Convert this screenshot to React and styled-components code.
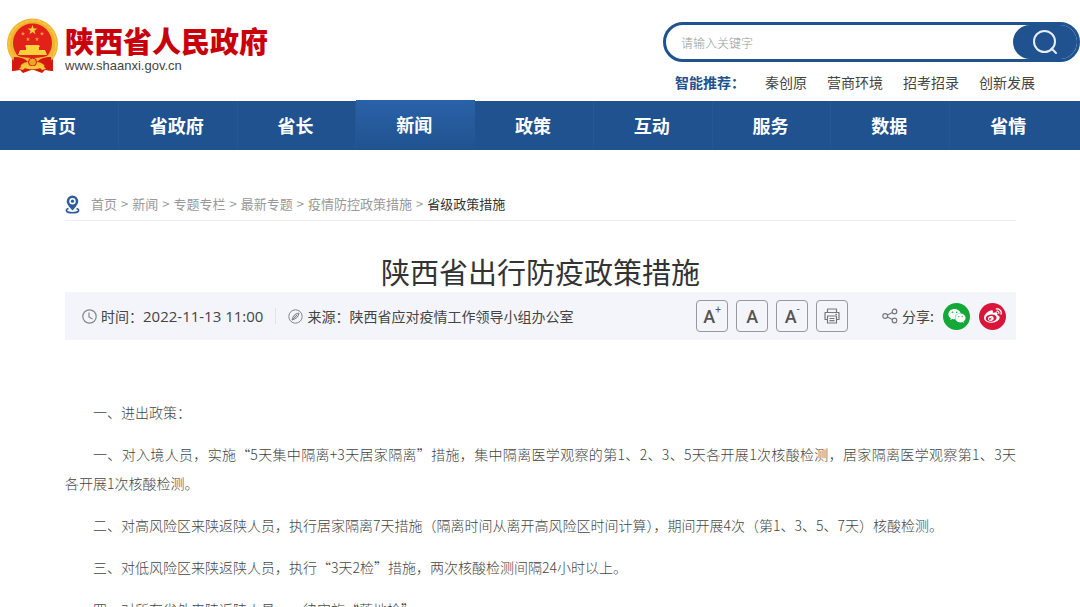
import React, { useState } from 'react';
import styled, { createGlobalStyle } from 'styled-components';
import { FaWeixin, FaWeibo } from 'react-icons/fa';

const NAV_ITEMS = ['首页', '省政府', '省长', '新闻', '政策', '互动', '服务', '数据', '省情'];

const HOT_WORDS = ['秦创原', '营商环境', '招考招录', '创新发展'];

const CRUMBS = ['首页', '新闻', '专题专栏', '最新专题', '疫情防控政策措施'];

// \u2060 keeps "各开展" together on one line
const PARAGRAPHS = [
  '一、进出政策：',
  '一、对入境人员，实施“5天集中隔离+3天居家隔离”措施，集中隔离医学观察的第1、2、3、5天各开展1次核酸检测，居家隔离医学观察第1、3天各\u2060开展1次核酸检测。',
  '二、对高风险区来陕返陕人员，执行居家隔离7天措施（隔离时间从离开高风险区时间计算），期间开展4次（第1、3、5、7天）核酸检测。',
  '三、对低风险区来陕返陕人员，执行“3天2检”措施，两次核酸检测间隔24小时以上。',
  '四、对所有省外来陕返陕人员，一律实施“落地检”。',
];

const GlobalStyle = createGlobalStyle`
  * {
    box-sizing: border-box;
  }

  html {
    overflow: hidden;
  }

  body {
    margin: 0;
    height: 100vh;
    overflow: hidden;
    background: #fff;
    color: #444;
    font-family: 'Noto Sans CJK SC', sans-serif;
    font-size: 14px;
  }

  a {
    color: inherit;
    text-decoration: none;
  }

  button {
    font: inherit;
    cursor: pointer;
  }
`;

const Header = styled.header`
  display: flex;
  justify-content: space-between;
  height: 101px;
  padding-left: 6px;
`;

const Brand = styled.a`
  display: flex;
  align-items: flex-start;
  gap: 6px;
  padding-top: 18px;
`;

const BrandText = styled.div`
  display: flex;
  flex-direction: column;
  padding-top: 4px;
`;

const BrandName = styled.span`
  color: #c8000b;
  font-size: 29px;
  font-weight: 900;
  line-height: 36px;
`;

const BrandUrl = styled.span`
  color: #444;
  font-family: 'Liberation Sans', Arial, sans-serif;
  font-size: 13px;
  line-height: 16px;
`;

const SearchArea = styled.div`
  flex: 0 1 417px;
  padding-top: 22px;
`;

const SearchForm = styled.form`
  display: flex;
  height: 40px;
  border: 3px solid #20528f;
  border-radius: 20px;
  background: #fff;
`;

const SearchInput = styled.input`
  flex: 1;
  min-width: 0;
  padding: 0 15px;
  border: 0;
  border-radius: 20px;
  outline: 0;
  background: transparent;
  font-family: inherit;
  font-size: 12px;

  &::placeholder {
    color: #999;
    font-weight: 300;
  }
`;

const SearchButton = styled.button`
  display: flex;
  align-items: center;
  justify-content: center;
  width: 64px;
  padding: 0;
  border: 0;
  border-radius: 17px;
  background: #20528f;
  color: #fff;
`;

const HotWords = styled.div`
  display: flex;
  align-items: center;
  gap: 20px;
  padding: 10px 0 0 12px;
  line-height: 20px;

  strong {
    width: 70px;
    color: #20528f;
    white-space: nowrap;
  }
`;

const Nav = styled.nav`
  display: flex;
  height: 49px;
  padding-right: 12px;
  background: #20528f;
`;

const NavLink = styled.a`
  display: flex;
  flex: 1;
  align-items: center;
  justify-content: center;
  padding: 0 2px 2px 0;
  border-right: 1px solid ${props => (props.$active ? 'transparent' : '#265793')};
  color: #fff;
  font-size: 18px;
  font-weight: 700;
  ${props => props.$active && `
    margin-top: -1px;
    background: linear-gradient(#2a62a8, #20528f);
  `}

  &:last-child {
    border-right: 0;
  }
`;

const Content = styled.main`
  padding: 38px 64px 0 65px;
`;

const Breadcrumb = styled.nav`
  display: flex;
  align-items: center;
  gap: 4px;
  height: 33px;
  border-bottom: 1px solid #ececec;
  color: #999;
  font-size: 13px;
  line-height: 20px;

  svg {
    margin-right: 7px;
  }
`;

const Current = styled.span`
  color: #333;
`;

const Title = styled.h1`
  margin: 29px 0 0;
  color: #333;
  font-size: 29px;
  font-weight: 400;
  line-height: 42px;
  text-align: center;
`;

const MetaBar = styled.div`
  display: flex;
  align-items: center;
  justify-content: space-between;
  height: 48px;
  padding: 0 10px 0 17px;
  background: #f4f5fb;
`;

const MetaGroup = styled.div`
  display: flex;
  align-items: center;
`;

const MetaItem = styled.span`
  display: flex;
  align-items: center;
  gap: 4px;
  line-height: 20px;

  & + & {
    margin-left: 12px;
    padding-left: 12px;
    border-left: 1px solid #e2e3e8;
    line-height: 16px;
  }

  time {
    font-family: 'Open Sans', sans-serif;
    font-size: 15px;
  }
`;

const Tools = styled.div`
  display: flex;
  gap: 8px;
`;

const ToolButton = styled.button`
  display: flex;
  align-items: center;
  justify-content: center;
  width: 32px;
  height: 32px;
  padding: 0;
  border: 1px solid #97989c;
  border-radius: 4px;
  background: transparent;
  color: #555;
  font-family: 'Roboto', sans-serif;
  font-size: 18px;
  font-weight: 500;

  sup {
    align-self: flex-start;
    font-size: 10px;
    font-weight: 400;
    line-height: 18px;
  }
`;

const Share = styled.div`
  display: flex;
  align-items: center;
  gap: 9px;
  margin-left: 34px;
`;

const ShareLabel = styled.span`
  display: flex;
  align-items: center;
  gap: 4px;
  font-size: 14px;
`;

const ShareButton = styled.button`
  display: flex;
  align-items: center;
  justify-content: center;
  width: 27px;
  height: 27px;
  padding: 0;
  border: 0;
  border-radius: 50%;
  background: ${props => props.$color};
  color: #fff;
`;

const Article = styled.article`
  padding-top: 58px;
  color: #444;
  font-weight: 300;
  line-height: 29px;

  p {
    margin: 0 0 13px;
    text-indent: 2em;
    text-align: justify;
  }
`;

const Emblem = () => (
  <svg width="53" height="56" viewBox="0 0 53 56" aria-hidden="true">
    <path d="M6 39 L16 43 L37 43 L47 39 L47 53 L39 52 L36 55 L28 52 L25 52 L17 55 L14 52 L6 53Z" fill="#d3180f" />
    <circle cx="26.500" cy="26" r="25.500" fill="#f0b32c" />
    <circle cx="26.500" cy="26" r="23.500" fill="none" stroke="#f6c544" strokeWidth="2" strokeDasharray="5 1" />
    <circle cx="26.500" cy="25" r="19.500" fill="#e2211a" />
    <path d="M26.500 7 L27.700 10.500 H31.400 L28.400 12.700 L29.500 16.300 L26.500 14 L23.500 16.300 L24.600 12.700 L21.600 10.500 H25.300Z" fill="#fbd23c" />
    <path d="M17 13.500l.6 1.500h1.500l-1.200 1 .4 1.500-1.300-.8-1.300.8.4-1.500-1.200-1h1.500zM36 13.500l.6 1.500h1.500l-1.200 1 .4 1.500-1.300-.8-1.300.8.4-1.500-1.200-1h1.500zM22 19l.6 1.500h1.500l-1.200 1 .4 1.500-1.300-.8-1.300.8.4-1.500-1.200-1h1.500zM31 19l.6 1.500h1.500l-1.200 1 .4 1.500-1.300-.8-1.300.8.4-1.500-1.200-1h1.500z" fill="#f09a3a" />
    <path d="M20 27H33L34 29H33V32H39L41 37H12L14 32H20V29H19Z" fill="#fbd23c" />
    <path d="M7 36 Q15 40 26.500 40 Q38 40 46 36 L44 42 Q35 44 31 49 H22 Q18 44 9 42Z" fill="#f5bd35" />
    <path d="M8 39 Q18 39 22 44 Q15 44 12 52 L6 53 L7 45ZM45 39 Q35 39 31 44 Q38 44 41 52 L47 53 L46 45Z" fill="#d3180f" />
    <circle cx="26.500" cy="44" r="4" fill="#f0a52a" stroke="#d3180f" />
    <path d="M13 51 Q19 44 23 48 H30 Q34 44 40 51 L36 52 Q33 48 30 51 H23 Q20 48 17 52Z" fill="#f6c83a" />
  </svg>
);

const SearchIcon = () => (
  <svg width="26" height="26" viewBox="0 0 26 26" fill="none" stroke="#e6effa" strokeWidth="2" strokeLinecap="round">
    <circle cx="12.500" cy="12.500" r="10.500" />
    <path d="M19.500 19.500 L24 24" />
  </svg>
);

const PinIcon = () => (
  <svg width="15" height="19" viewBox="0 0 15 19" fill="none" aria-hidden="true">
    <path d="M3.500 13.500 C0 14.500 0.500 17.800 7.500 17.800 C14.500 17.800 15 14.500 11.500 13.500" stroke="#2c5c9c" strokeWidth="1.600" />
    <path d="M7.500 0.500 A5.800 5.800 0 0 0 1.700 6.300 C1.700 10 7.500 15.500 7.500 15.500 C7.500 15.500 13.300 10 13.300 6.300 A5.800 5.800 0 0 0 7.500 0.500Z" fill="#2c5c9c" />
    <circle cx="7.500" cy="6.200" r="3.200" fill="#fff" />
    <circle cx="7.500" cy="6.200" r="1.600" fill="#2c5c9c" />
  </svg>
);

const ClockIcon = () => (
  <svg width="15" height="15" viewBox="0 0 15 15" fill="none" stroke="#85868b" strokeWidth="1.200" aria-hidden="true">
    <circle cx="7.500" cy="7.500" r="6.700" />
    <path d="M7 3.500 V8 L10.500 10" />
  </svg>
);

const CompassIcon = () => (
  <svg width="15" height="15" viewBox="0 0 15 15" fill="none" stroke="#85868b" strokeWidth="1" aria-hidden="true">
    <circle cx="7.500" cy="7.500" r="6.700" />
    <path d="M11 4 C7 4.500 4.500 7 4 11 C8 10 10.500 8 11 4Z" fill="#d5d6da" />
    <path d="M4 11 L9 6" />
  </svg>
);

const PrintIcon = () => (
  <svg width="16" height="16" viewBox="0 0 16 16" fill="none" stroke="#77787c" strokeWidth="1.200" strokeLinejoin="round" aria-hidden="true">
    <path d="M3.500 4.500 V1 H12.500 V4.500" />
    <path d="M3.500 11.500 H1 V4.500 H15 V11.500 H12.500" />
    <path d="M3.500 8 H12.500 V15 H3.500Z" />
    <path d="M5.500 10.500 H10.500 M5.500 12.700 H10.500 M11.500 6.300 H13" />
  </svg>
);

const ShareIcon = () => (
  <svg width="16" height="16" viewBox="0 0 16 16" fill="none" stroke="#77787c" strokeWidth="1.200" aria-hidden="true">
    <circle cx="3.200" cy="8" r="2.400" />
    <circle cx="12.500" cy="3.500" r="2.300" />
    <circle cx="12.500" cy="12.500" r="2.300" />
    <path d="M5.400 7 L10.400 4.500 M5.400 9 L10.400 11.500" />
  </svg>
);

function App() {
  const [keyword, setKeyword] = useState('');
  const [fontSize, setFontSize] = useState(14);

  return (
    <>
      <GlobalStyle />
      <Header>
        <Brand href="#">
          <Emblem />
          <BrandText>
            <BrandName>陕西省人民政府</BrandName>
            <BrandUrl>www.shaanxi.gov.cn</BrandUrl>
          </BrandText>
        </Brand>
        <SearchArea>
          <SearchForm role="search" onSubmit={e => e.preventDefault()}>
            <SearchInput
              aria-label="请输入关键字"
              placeholder="请输入关键字"
              value={keyword}
              onChange={e => setKeyword(e.target.value)}
            />
            <SearchButton type="submit" aria-label="搜索">
              <SearchIcon />
            </SearchButton>
          </SearchForm>
          <HotWords>
            <strong>智能推荐：</strong>
            {HOT_WORDS.map(word => <a href="#" key={word}>{word}</a>)}
          </HotWords>
        </SearchArea>
      </Header>

      <Nav>
        {NAV_ITEMS.map(item => (
          <NavLink href="#" key={item} $active={item === '新闻'}>{item}</NavLink>
        ))}
      </Nav>

      <Content>
        <Breadcrumb>
          <PinIcon />
          {CRUMBS.map(crumb => (
            <React.Fragment key={crumb}>
              <a href="#">{crumb}</a>
              <span>&gt;</span>
            </React.Fragment>
          ))}
          <Current>省级政策措施</Current>
        </Breadcrumb>

        <Title>陕西省出行防疫政策措施</Title>

        <MetaBar>
          <MetaGroup>
            <MetaItem>
              <ClockIcon />
              <span>时间：<time dateTime="2022-11-13T11:00">2022-11-13 11:00</time></span>
            </MetaItem>
            <MetaItem>
              <CompassIcon />
              <span>来源：陕西省应对疫情工作领导小组办公室</span>
            </MetaItem>
          </MetaGroup>
          <MetaGroup>
            <Tools>
              <ToolButton aria-label="放大字号" onClick={() => setFontSize(fontSize + 2)}>A<sup>+</sup></ToolButton>
              <ToolButton aria-label="默认字号" onClick={() => setFontSize(14)}>A</ToolButton>
              <ToolButton aria-label="缩小字号" onClick={() => setFontSize(Math.max(12, fontSize - 2))}>A<sup>-</sup></ToolButton>
              <ToolButton aria-label="打印" onClick={() => window.print()}><PrintIcon /></ToolButton>
            </Tools>
            <Share>
              <ShareLabel><ShareIcon />分享:</ShareLabel>
              <ShareButton $color="#13a838" aria-label="微信"><FaWeixin size={18} /></ShareButton>
              <ShareButton $color="#d9163a" aria-label="微博"><FaWeibo size={18} /></ShareButton>
            </Share>
          </MetaGroup>
        </MetaBar>

        <Article style={{ fontSize }}>
          {PARAGRAPHS.map(text => <p key={text}>{text}</p>)}
        </Article>
      </Content>
    </>
  );
}

export default App;
